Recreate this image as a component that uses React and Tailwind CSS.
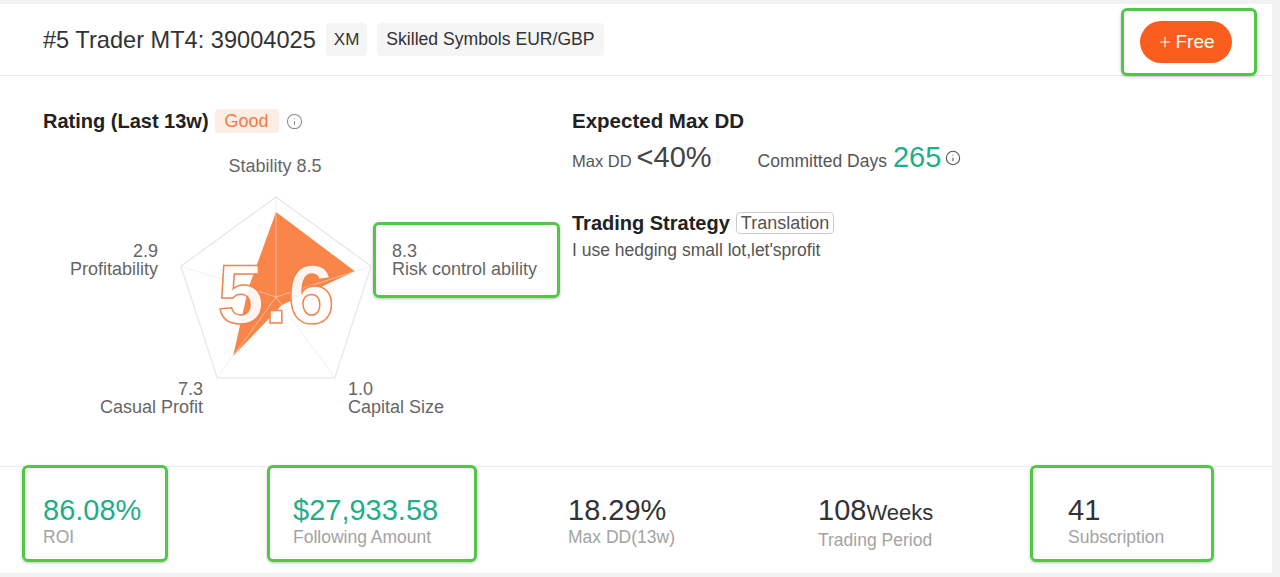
import React from 'react';
import { Info, Plus } from 'lucide-react';

const radar = [
  { key: 'stability', value: 8.5 },
  { key: 'risk', value: 8.3 },
  { key: 'capital', value: 1.0 },
  { key: 'casual', value: 7.3 },
  { key: 'profit', value: 2.9 },
];

const CX = 233;
const CY = 147;
const R = 100;

// punto sul pentagono: indice 0 in alto, senso orario
const pt = (i, r) => {
  const a = (-90 + i * 72) * (Math.PI / 180);
  return [CX + r * Math.cos(a), CY + r * Math.sin(a)];
};

const RadarChart = () => {
  const outer = radar.map((_, i) => pt(i, R).join(',')).join(' ');
  const data = radar.map((d, i) => pt(i, d.value * 10).join(',')).join(' ');

  return (
    <div className="relative mt-[16px] h-[275px] w-[529px] text-[18px] leading-[18px] text-[#666]">
      <svg width="529" height="275" className="absolute left-0 top-0">
        <polygon points={outer} fill="none" stroke="#e6e6e6" strokeWidth="1.2" />
        <polygon points={data} fill="#fa8548" />
        {radar.map((_, i) => {
          const [x, y] = pt(i, R);
          return <line key={i} x1={CX} y1={CY} x2={x} y2={y} stroke="#e6e6e6" strokeOpacity="0.55" strokeWidth="1" />;
        })}
        <text
          x={CX}
          y={173}
          textAnchor="middle"
          fontFamily="'Liberation Sans', Arial, sans-serif"
          fontWeight="700"
          fontSize="84"
          fill="#ffffff"
          fillOpacity="0.92"
          stroke="#f3834c"
          strokeWidth="1.5"
        >
          5.6
        </text>
      </svg>

      <div className="absolute left-[232px] top-[7px] -translate-x-1/2 whitespace-nowrap">Stability 8.5</div>

      <div className="absolute left-0 top-[92px] w-[115px] text-right">
        <div>2.9</div>
        <div>Profitability</div>
      </div>

      <div className="absolute left-[330px] top-[72px] h-[76px] w-[187px] rounded-md border-[3px] border-[#4ec845] pl-[16px] pt-[17px] shadow-[0_1px_3px_rgba(0,0,0,0.25)]">
        <div>8.3</div>
        <div className="whitespace-nowrap">Risk control ability</div>
      </div>

      <div className="absolute left-0 top-[230px] w-[160px] text-right">
        <div>7.3</div>
        <div className="whitespace-nowrap">Casual Profit</div>
      </div>

      <div className="absolute left-[305px] top-[230px]">
        <div>1.0</div>
        <div className="whitespace-nowrap">Capital Size</div>
      </div>
    </div>
  );
};

const Stat = ({ value, unit, label, green, boxed, className }) => (
  <div
    className={`h-[97px] shrink-0 rounded-md border-[3px] pt-[26px] ${
      boxed ? 'border-[#4ec845] shadow-[0_1px_3px_rgba(0,0,0,0.25)]' : 'border-transparent'
    } ${className}`}
  >
    <div className={`whitespace-nowrap text-[29px] leading-[32px] ${green ? 'text-[#1fae87]' : 'text-[#333]'}`}>
      {value}
      {unit && <span className="text-[22px]">{unit}</span>}
    </div>
    <div className="mt-[1px] whitespace-nowrap text-[17.5px] leading-[20px] text-[#a3a3a3]">{label}</div>
  </div>
);

const App = () => {
  return (
    <div className="h-[577px] w-full overflow-hidden bg-[#f2f2f2] font-['Liberation_Sans',Arial,sans-serif] text-[#333]">
      <div className="mt-[4px] h-[569px] w-[1272px] bg-white">
        {/* Header */}
        <div className="flex h-[72px] items-center justify-between border-b border-[#ebebeb] pl-[43px] pr-[15px]">
          <div className="flex items-center gap-[10px]">
            <h1 className="text-[23.6px] leading-[30px] text-[#333]">#5 Trader MT4: 39004025</h1>
            <span className="flex h-[33px] items-center rounded bg-[#f5f5f5] px-[8px] text-[17px] text-[#333]">XM</span>
            <span className="flex h-[33px] items-center rounded bg-[#f5f5f5] px-[9px] text-[17.6px] text-[#333]">
              Skilled Symbols EUR/GBP
            </span>
          </div>
          <div className="mt-[5px] flex h-[68px] w-[136px] items-center justify-center rounded-md border-[3px] border-[#4ec845] shadow-[0_1px_3px_rgba(0,0,0,0.25)]">
            <button className="mr-[6px] flex h-[42px] w-[92px] items-center justify-center gap-[2px] rounded-full bg-[#fb5d1f] text-[19px] text-white">
              <Plus size={16} strokeWidth={1.6} />
              Free
            </button>
          </div>
        </div>

        {/* Rating + strategy */}
        <div className="flex h-[390px] pl-[43px] pt-[32px]">
          <div className="w-[529px]">
            <div className="flex h-[26px] items-center">
              <h2 className="text-[20px] font-bold text-[#222]">Rating (Last 13w)</h2>
              <span className="ml-[6px] flex h-[24px] items-center rounded-sm bg-[#fdeee5] px-[10px] text-[18px] text-[#f27a44]">
                Good
              </span>
              <Info size={17} strokeWidth={1.5} className="ml-[7px] text-[#888]" />
            </div>
            <RadarChart />
          </div>

          <div>
            <h2 className="h-[26px] text-[20.5px] font-bold leading-[26px] text-[#222]">Expected Max DD</h2>
            <div className="mt-[8px] flex items-baseline">
              <span className="text-[16.5px] text-[#555]">Max DD</span>
              <span className="ml-[5px] text-[29px] leading-[30px] text-[#444]">&lt;40%</span>
              <span className="ml-[46px] text-[17.5px] text-[#555]">Committed Days</span>
              <span className="ml-[6px] text-[29px] leading-[30px] text-[#1fae87]">265</span>
              <Info size={16} strokeWidth={1.6} className="ml-[4px] self-center text-[#555]" />
            </div>
            <div className="mt-[36px] flex h-[26px] items-center">
              <h2 className="text-[20px] font-bold text-[#222]">Trading Strategy</h2>
              <span className="ml-[6px] flex h-[22px] items-center rounded-sm border border-[#ccc] px-[4px] text-[18px] text-[#555]">
                Translation
              </span>
            </div>
            <p className="mt-[4px] text-[17.5px] leading-[20px] text-[#555]">I use hedging small lot,let'sprofit</p>
          </div>
        </div>

        {/* Statistiche */}
        <div className="flex border-t border-[#ebebeb] pl-[22px]">
          <div className="-mt-[2px] flex items-start">
            <Stat value="86.08%" label="ROI" green boxed className="w-[146px] pl-[18px]" />
            <Stat value="$27,933.58" label="Following Amount" green boxed className="ml-[99px] w-[210px] pl-[23px]" />
            <Stat value="18.29%" label="Max DD(13w)" className="ml-[88px] w-[250px]" />
            <Stat value="108" unit="Weeks" label="Trading Period" className="w-[215px]" />
            <Stat value="41" label="Subscription" boxed className="w-[184px] pl-[35px]" />
          </div>
        </div>
      </div>
    </div>
  );
};

export default App;
